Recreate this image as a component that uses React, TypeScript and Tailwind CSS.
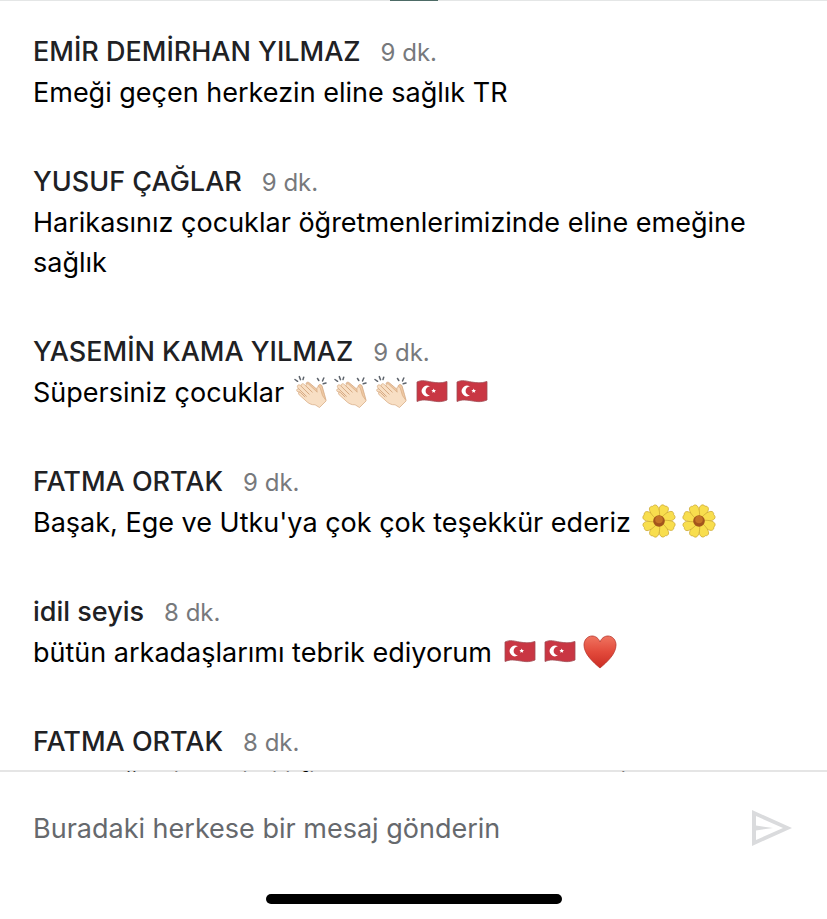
import { Fragment } from "react";
import type { ReactNode } from "react";

interface Message {
  author: string;
  time: string;
  body: ReactNode;
}

function Clap() {
  return (
    <svg viewBox="0 0 36 36" className="h-9 w-9" role="img" aria-label="alkış">
      <path
        d="M1 6.500l2.600 1.800M5.300 3.600l1.200 3M9.700 4.200l-.7 2.300M23.500 5.500l1.300 2M29.800 5l-1.300 3M32 10l-2.800.700"
        stroke="#5f656d"
        strokeWidth="1.500"
        strokeLinecap="round"
        fill="none"
      />
      <path
        d="M12 10.200c1-1.600 2.600-1.200 3.800 0l8.200 7 .2-3.900c.2-2.200 3-2.300 3.900-.2l2.400 8.400 1.500 5.500-5.500 4z"
        fill="#efc9a3"
        stroke="#cf9f78"
        strokeWidth=".7"
      />
      <path
        d="M3.200 18.400c-1.500-1.700.5-3.400 2-2.100l-1.300-1.500c-1.600-2 .7-4 2.400-2.300l1.200 1.100c-1.400-2.200 1-3.900 2.700-2.200l1.900 1.800c-.9-1.900 1.300-3.200 2.900-1.700l8.200 7.700c-.2-1.600-.6-3.300-.1-4.500.6-1.500 2.600-1.200 3.200.5l2.200 7.400 3.700 5.200-6.700 6.700-4.400-2.700c-4 .2-6.700-1.500-9.100-3.900L5.200 21.800c-1.600-1.700-.5-3.300 1-2.500z"
        fill="#f8dfc4"
        stroke="#d9ae88"
        strokeWidth=".8"
      />
      <path
        d="M5.200 16.300l7.500 7.300M7.500 13.600l8 7.900M12.100 13.200l6.400 6.200M6.200 19.300l5 4.800"
        stroke="#d3a47c"
        strokeWidth=".9"
        fill="none"
      />
    </svg>
  );
}

function Flag() {
  return (
    <svg viewBox="0 0 36 36" className="h-9 w-9" role="img" aria-label="Türk bayrağı">
      <path
        d="M3 9c5.500-2.600 9.500-.8 14.500 0s9.500 1.500 15.500-.5v18.500c-6 2.500-10.500 1.600-15.500.8S8.500 26.200 3 28.500z"
        fill="#c93643"
        stroke="#a04c54"
        strokeWidth=".8"
      />
      <path d="M16 13.500a5.300 5.300 0 1 0 0 8.800 4.300 4.300 0 1 1 0-8.800z" fill="#fff" />
      <path d="M19.700 15.500l.7 1.500 1.600.1-1.200 1.100.4 1.600-1.500-.8-1.400.8.300-1.600-1.200-1.100 1.600-.1z" fill="#fff" />
    </svg>
  );
}

function Flower() {
  return (
    <svg viewBox="0 0 36 36" className="h-9 w-9" role="img" aria-label="çiçek">
      <g fill="#f8de4e" stroke="#cda935" strokeWidth=".7">
        {[22, 67, 112, 157, 202, 247, 292, 337].map((angle) => (
          <path
            key={angle}
            d="M18 18C14.500 13 12.500 6.500 13.800 3.200c.9-2 2.900-2 4.200-1.200 1.300-.8 3.300-.8 4.200 1.200 1.300 3.300-.7 9.800-4.200 14.800z"
            transform={`rotate(${angle} 18 18)`}
          />
        ))}
      </g>
      <circle cx="18" cy="18" r="5.800" fill="#a3541c" />
      <circle cx="18" cy="16.500" r="3.800" fill="#c47327" />
    </svg>
  );
}

function Heart() {
  return (
    <svg viewBox="0 0 36 36" className="h-9 w-9" role="img" aria-label="kalp">
      <defs>
        <linearGradient id="heart" x1="0" y1="0" x2="0" y2="1">
          <stop offset="0" stopColor="#ef7460" />
          <stop offset=".5" stopColor="#e24a3b" />
          <stop offset="1" stopColor="#cb2c23" />
        </linearGradient>
      </defs>
      <path
        d="M18 35C11 29 2 21 2 12 2 6.800 5.600 3 10 3c3.700 0 6.600 2.300 8 6 1.400-3.700 4.300-6 8-6 4.400 0 8 3.800 8 9C34 21 25 29 18 35z"
        fill="url(#heart)"
        stroke="#b8352c"
        strokeWidth=".8"
      />
    </svg>
  );
}

function WithEmoji({ text, emoji }: { text: string; emoji: (() => ReactNode)[] }) {
  return (
    <span className="flex items-center gap-2.5">
      {text}
      <span className="flex items-center gap-1 pb-1">
        {emoji.map((Icon, i) => (
          <Fragment key={i}>
            <Icon />
          </Fragment>
        ))}
      </span>
    </span>
  );
}

const messages: Message[] = [
  { author: "EMİR DEMİRHAN YILMAZ", time: "9 dk.", body: "Emeği geçen herkezin eline sağlık TR" },
  { author: "YUSUF ÇAĞLAR", time: "9 dk.", body: "Harikasınız çocuklar öğretmenlerimizinde eline emeğine sağlık" },
  {
    author: "YASEMİN KAMA YILMAZ",
    time: "9 dk.",
    body: <WithEmoji text="Süpersiniz çocuklar" emoji={[Clap, Clap, Clap, Flag, Flag]} />,
  },
  {
    author: "FATMA ORTAK",
    time: "9 dk.",
    body: <WithEmoji text="Başak, Ege ve Utku'ya çok çok teşekkür ederiz" emoji={[Flower, Flower]} />,
  },
  {
    author: "idil seyis",
    time: "8 dk.",
    body: <WithEmoji text="bütün arkadaşlarımı tebrik ediyorum" emoji={[Flag, Flag, Heart]} />,
  },
  { author: "FATMA ORTAK", time: "8 dk.", body: "Çok değerli ve bilgili fidanlarımıza sonsuz tebrikler" },
];

function ChatMessage({ author, time, body }: Message) {
  return (
    <li className="text-[27px] leading-10">
      <div className="flex items-baseline gap-5">
        <h2 className="font-medium text-[#202124]">{author}</h2>
        <time className="text-2xl leading-10 text-[#77797c]">{time}</time>
      </div>
      <div className="text-black">{body}</div>
    </li>
  );
}

export default function App() {
  return (
    <div className="flex h-screen flex-col bg-white font-['Inter',sans-serif]">
      <div className="h-px shrink-0 bg-[#e4e6e6]">
        <div className="mx-auto h-px w-12 bg-[#4d6b66]" />
      </div>
      <main className="min-h-0 flex-1 overflow-hidden px-[33px] pt-[31px] shadow-[inset_0_-2px_0_#e5e5e5]">
        <ul className="flex flex-col gap-[49px]">
          {messages.map((message, i) => (
            <ChatMessage key={i} {...message} />
          ))}
        </ul>
      </main>
      <form className="flex shrink-0 items-center gap-4 pt-[30px] pr-[35px] pb-[65px] pl-[33px]" onSubmit={(e) => e.preventDefault()}>
        <input
          type="text"
          aria-label="Buradaki herkese bir mesaj gönderin"
          placeholder="Buradaki herkese bir mesaj gönderin"
          className="h-[52px] min-w-0 flex-1 text-[27px] text-black outline-none placeholder:text-[#66696d]"
        />
        <button type="submit" aria-label="Gönder" className="text-[#dadbdd]">
          <svg viewBox="0 0 40 36" className="h-9 w-10" fill="none">
            <path d="M0 0L40 18L0 36zM4 6V15.500L21 18L4 20.500V30L31 18z" fill="currentColor" fillRule="evenodd" />
          </svg>
        </button>
      </form>
      <div className="mx-auto -mt-[25px] mb-[15px] h-2.5 w-74 shrink-0 rounded-full bg-black" />
    </div>
  );
}
